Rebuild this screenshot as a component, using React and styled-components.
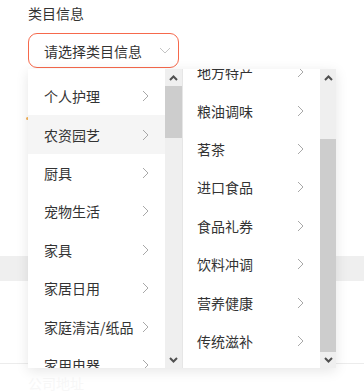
import React from 'react';
import styled, { createGlobalStyle } from 'styled-components';

const GlobalStyle = createGlobalStyle`
  html, body {
    margin: 0;
    padding: 0;
    background: #fff;
  }
  body {
    font-family: "Noto Sans CJK SC", "Liberation Sans", sans-serif;
  }
`;

const Page = styled.div`
  position: relative;
  width: 364px;
  height: 391px;
  overflow: hidden;
  background: #fff;
`;

const Field = styled.div`
  padding: 4px 0 0 28px;
`;

const Label = styled.div`
  font-size: 14px;
  line-height: 18px;
  color: #333;
  height: 29px;
`;

const Select = styled.div`
  box-sizing: border-box;
  width: 151px;
  height: 35px;
  border: 1px solid #f6694c;
  border-radius: 9px;
  display: flex;
  align-items: center;
  justify-content: space-between;
  padding: 0 7px 0 15px;
  font-size: 14px;
  color: #333;
`;

const Asterisk = styled.div`
  margin: 49px 0 0 26px;
  width: 3px;
  height: 3px;
  border-radius: 50%;
  background: #f5b35a;
`;

const Band = styled.div`
  margin-top: 136px;
  height: 25px;
  background: #efefef;
`;

const Divider = styled.div`
  margin-top: 82px;
  height: 1px;
  background: #ececec;
`;

const Ghost = styled.div`
  padding: 11px 0 0 28px;
  font-size: 14px;
  line-height: 16px;
  color: #f7f7f7;
`;

const Dropdown = styled.div`
  position: absolute;
  top: 69px;
  left: 28px;
  display: flex;
  box-shadow: 0 3px 12px rgba(0, 0, 0, 0.1);
`;

const Panel = styled.div`
  width: 154px;
  height: 299px;
  display: flex;
  background: #fff;
  border-left: ${(p) => (p.$divided ? '1px solid #e6e6e6' : 'none')};
  box-sizing: border-box;
`;

const Viewport = styled.div`
  flex: 1;
  overflow: hidden;
`;

const List = styled.ul`
  list-style: none;
  margin: ${(p) => p.$offset}px 0 0;
  padding: 0;
`;

const Item = styled.li`
  height: 38.4px;
  display: flex;
  align-items: center;
  justify-content: space-between;
  padding: 0 16px 0 ${(p) => p.$indent}px;
  font-size: 14px;
  color: #333;
  background: ${(p) => (p.$hover ? '#f5f5f5' : 'transparent')};
  white-space: nowrap;
`;

const Scrollbar = styled.div`
  width: ${(p) => p.$width}px;
  display: flex;
  flex-direction: column;
  background: #efefef;
`;

const ArrowBtn = styled.div`
  height: ${(p) => p.$h}px;
  display: flex;
  align-items: center;
  justify-content: center;
`;

const Track = styled.div`
  flex: 1;
`;

const Thumb = styled.div`
  margin-top: ${(p) => p.$top}px;
  height: ${(p) => p.$height}px;
  background: #cdcdcd;
`;

const Chevron = () => (
  <svg width="7" height="12" viewBox="0 0 7 12">
    <polyline points="1,1 6,6 1,11" fill="none" stroke="#a8a8a8" strokeWidth="1" />
  </svg>
);

const SelectArrow = () => (
  <svg width="12" height="7" viewBox="0 0 12 7">
    <polyline points="1,1 6,6 11,1" fill="none" stroke="#c4c4c4" strokeWidth="1" />
  </svg>
);

const Caret = ({ down }) => (
  <svg width="9" height="6" viewBox="0 0 9 6">
    <polyline
      points={down ? '1,1 4.5,4.5 8,1' : '1,5 4.5,1.5 8,5'}
      fill="none"
      stroke="#505050"
      strokeWidth="2"
    />
  </svg>
);

const Bar = ({ width, thumbTop, thumbHeight }) => (
  <Scrollbar $width={width}>
    <ArrowBtn $h={17}>
      <Caret />
    </ArrowBtn>
    <Track>
      <Thumb $top={thumbTop} $height={thumbHeight} />
    </Track>
    <ArrowBtn $h={16}>
      <Caret down />
    </ArrowBtn>
  </Scrollbar>
);

const first = ['个人护理', '农资园艺', '厨具', '宠物生活', '家具', '家居日用', '家庭清洁/纸品', '家用电器'];
const second = ['地方特产', '粮油调味', '茗茶', '进口食品', '食品礼券', '饮料冲调', '营养健康', '传统滋补'];

const App = () => {
  return (
    <Page>
      <GlobalStyle />
      <Field>
        <Label>类目信息</Label>
        <Select>
          <span>请选择类目信息</span>
          <SelectArrow />
        </Select>
      </Field>
      <Asterisk />
      <Band />
      <Divider />
      <Ghost>公司地址</Ghost>

      <Dropdown>
        <Panel>
          <Viewport>
            <List $offset={8}>
              {first.map((name, i) => (
                <Item key={name} $indent={16} $hover={i === 1}>
                  <span>{name}</span>
                  <Chevron />
                </Item>
              ))}
            </List>
          </Viewport>
          <Bar width={17} thumbTop={0} thumbHeight={52} />
        </Panel>
        <Panel $divided>
          <Viewport>
            <List $offset={-16}>
              {second.map((name) => (
                <Item key={name} $indent={14}>
                  <span>{name}</span>
                  <Chevron />
                </Item>
              ))}
            </List>
          </Viewport>
          <Bar width={16} thumbTop={53} thumbHeight={213} />
        </Panel>
      </Dropdown>
    </Page>
  );
};

export default App;
